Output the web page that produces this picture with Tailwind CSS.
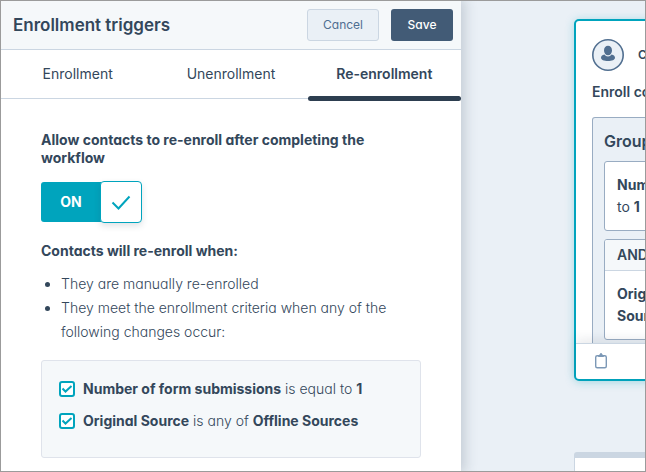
<!DOCTYPE html>
<html lang="en">
<head>
  <meta charset="UTF-8" />
  <meta name="viewport" content="width=device-width, initial-scale=1.0" />
  <title>Enrollment triggers</title>
  <script src="https://cdn.jsdelivr.net/npm/@tailwindcss/browser@4"></script>
</head>
<body class="font-['Inter',sans-serif] [font-feature-settings:'cv11'] text-sm text-[#33475b]">
  <div class="flex min-h-screen overflow-hidden border border-[#9b9b9b] bg-[#eaf0f6]">

    <!-- Side panel -->
    <main class="relative z-10 w-5/7 bg-white shadow-[2px_0_12px_2px_rgba(45,62,80,0.2)]">
      <header class="flex h-[49px] items-center justify-between border-b border-[#cbd6e2] bg-[#f5f8fa] pr-2 pl-3">
        <h1 class="text-[17px] leading-6 font-semibold">Enrollment triggers</h1>
        <div class="flex gap-3 text-xs">
          <button type="button" class="h-8 w-[72px] rounded-[3px] border border-[#cbd6e2] bg-[#eaf0f6] text-[#506e91]">Cancel</button>
          <button type="button" class="h-8 w-[62px] rounded-[3px] bg-[#425b76] font-medium text-white">Save</button>
        </div>
      </header>

      <nav class="grid h-[49px] grid-cols-3 border-b border-[#cbd6e2]">
        <a href="#" class="flex items-center justify-center">Enrollment</a>
        <a href="#" class="flex items-center justify-center">Unenrollment</a>
        <a href="#" class="relative flex items-center justify-center font-semibold">
          Re-enrollment
          <span class="absolute inset-x-0 -bottom-[3px] h-[5px] rounded-full bg-[#2d3e50]"></span>
        </a>
      </nav>

      <section class="px-10 pt-8 pb-3">
        <h2 class="leading-[18px] font-bold">Allow contacts to re-enroll after completing the workflow</h2>

        <label class="mt-[14px] flex w-fit items-center">
          <input type="checkbox" role="switch" aria-label="Allow re-enrollment" class="sr-only" checked />
          <span class="flex h-10 w-[60px] items-center justify-center rounded-l-[3px] bg-[#00a4bd] font-bold text-white">ON</span>
          <span class="-ml-px flex h-[42px] w-[42px] items-center justify-center rounded-[4px] border border-[#00a4bd] bg-white shadow-[0_3px_6px_rgba(45,62,80,0.15)]">
            <svg class="h-5 w-5" viewBox="0 0 20 20" fill="none" stroke="#00a4bd" stroke-width="2"><path d="M1.500 10.500l6 6L18.500 4.500" /></svg>
          </span>
        </label>

        <h2 class="mt-[19px] leading-[18px] font-bold">Contacts will re-enroll when:</h2>
        <ul class="mt-3 list-disc pl-5 leading-6 font-light">
          <li>They are manually re-enrolled</li>
          <li>They meet the enrollment criteria when any of the following changes occur:</li>
        </ul>

        <div class="mt-4 rounded-[3px] border border-[#dfe3eb] bg-[#f5f8fa] px-[17px] pt-3 pb-5 leading-8 font-light">
          <label class="flex items-center gap-2">
            <span class="relative flex">
              <input type="checkbox" checked class="h-4 w-4 appearance-none rounded-[3px] border-2 border-[#00a4bd] bg-white" />
              <svg class="absolute inset-0 h-4 w-4" viewBox="0 0 16 16" fill="none" stroke="#00a4bd" stroke-width="2"><path d="M3.500 7.500l3 3 6-5.500" /></svg>
            </span>
            <span><b class="font-bold">Number of form submissions</b> is equal to <b class="font-bold">1</b></span>
          </label>
          <label class="flex items-center gap-2">
            <span class="relative flex">
              <input type="checkbox" checked class="h-4 w-4 appearance-none rounded-[3px] border-2 border-[#00a4bd] bg-white" />
              <svg class="absolute inset-0 h-4 w-4" viewBox="0 0 16 16" fill="none" stroke="#00a4bd" stroke-width="2"><path d="M3.500 7.500l3 3 6-5.500" /></svg>
            </span>
            <span><b class="font-bold">Original Source</b> is any of <b class="font-bold">Offline Sources</b></span>
          </label>
        </div>
      </section>
    </main>

    <!-- Workflow canvas, runs off the right edge -->
    <aside class="flex w-2/7 flex-col overflow-hidden pt-[18px] pl-[113px] whitespace-nowrap">
      <div class="w-80 rounded-[5px] border-2 border-[#00a4bd] bg-white shadow-[0_1px_10px_rgba(0,164,189,0.3)]">
        <div class="flex items-center gap-[14px] px-4 pt-[18px]">
          <svg class="h-8 w-8" viewBox="0 0 32 32">
            <circle cx="16" cy="16" r="15.200" fill="#eaf0f6" stroke="#516f90" stroke-width="1.600" />
            <ellipse cx="16" cy="11.500" rx="4" ry="4.800" fill="#516f90" />
            <path d="M12.500 15.500c-2.500.5-3.500 1.700-3.500 3.200 0 2 3 3.300 7 3.300s7-1.300 7-3.300c0-1.500-1-2.700-3.500-3.200-.8 1.200-2 2-3.500 2s-2.700-.8-3.500-2z" fill="#516f90" />
          </svg>
          <span class="text-xs font-semibold">Contact enrollment trigger</span>
        </div>
        <p class="px-4 pt-3 leading-[18px] font-semibold">Enroll contacts when</p>

        <div class="mx-4 mt-4 rounded-t-[3px] border border-b-0 border-[#99acc2] bg-[#eaf0f6] px-[11px] pb-[3px]">
          <h3 class="pt-3 pb-2 text-base leading-[23px] font-semibold">Group 1</h3>
          <div class="rounded-[3px] border border-[#99acc2] bg-white p-3 leading-[22px]">
            <p class="font-bold">Number of form submissions</p>
            <p>to <b class="font-bold">1</b></p>
          </div>
          <div class="mt-2 overflow-hidden rounded-[3px] border border-[#99acc2] bg-white leading-[22px]">
            <h4 class="border-b border-[#cbd6e2] bg-[#f5f8fa] px-3 py-1 font-semibold">AND</h4>
            <div class="p-3 font-bold">
              <p>Original Source</p>
              <p>Source</p>
            </div>
          </div>
        </div>

        <footer class="border-t border-[#cbd6e2] px-[18px] pt-[9px] pb-[10px] shadow-[0_-4px_10px_rgba(45,62,80,0.1)]">
          <svg class="h-4 w-4" viewBox="0 0 16 16" fill="none" stroke="#7c98b6" stroke-width="1.400">
            <rect x="1.700" y="2.700" width="10.600" height="12" rx="1.500" />
            <path d="M4.200 3.300h5.600M5 2.200h4M6 1h2" />
          </svg>
        </footer>
      </div>

      <div class="mt-[71px] w-80 flex-1 rounded-t-[3px] border-x border-t-[6px] border-[#cbd6e2] bg-white"></div>
    </aside>
  </div>
</body>
</html>
